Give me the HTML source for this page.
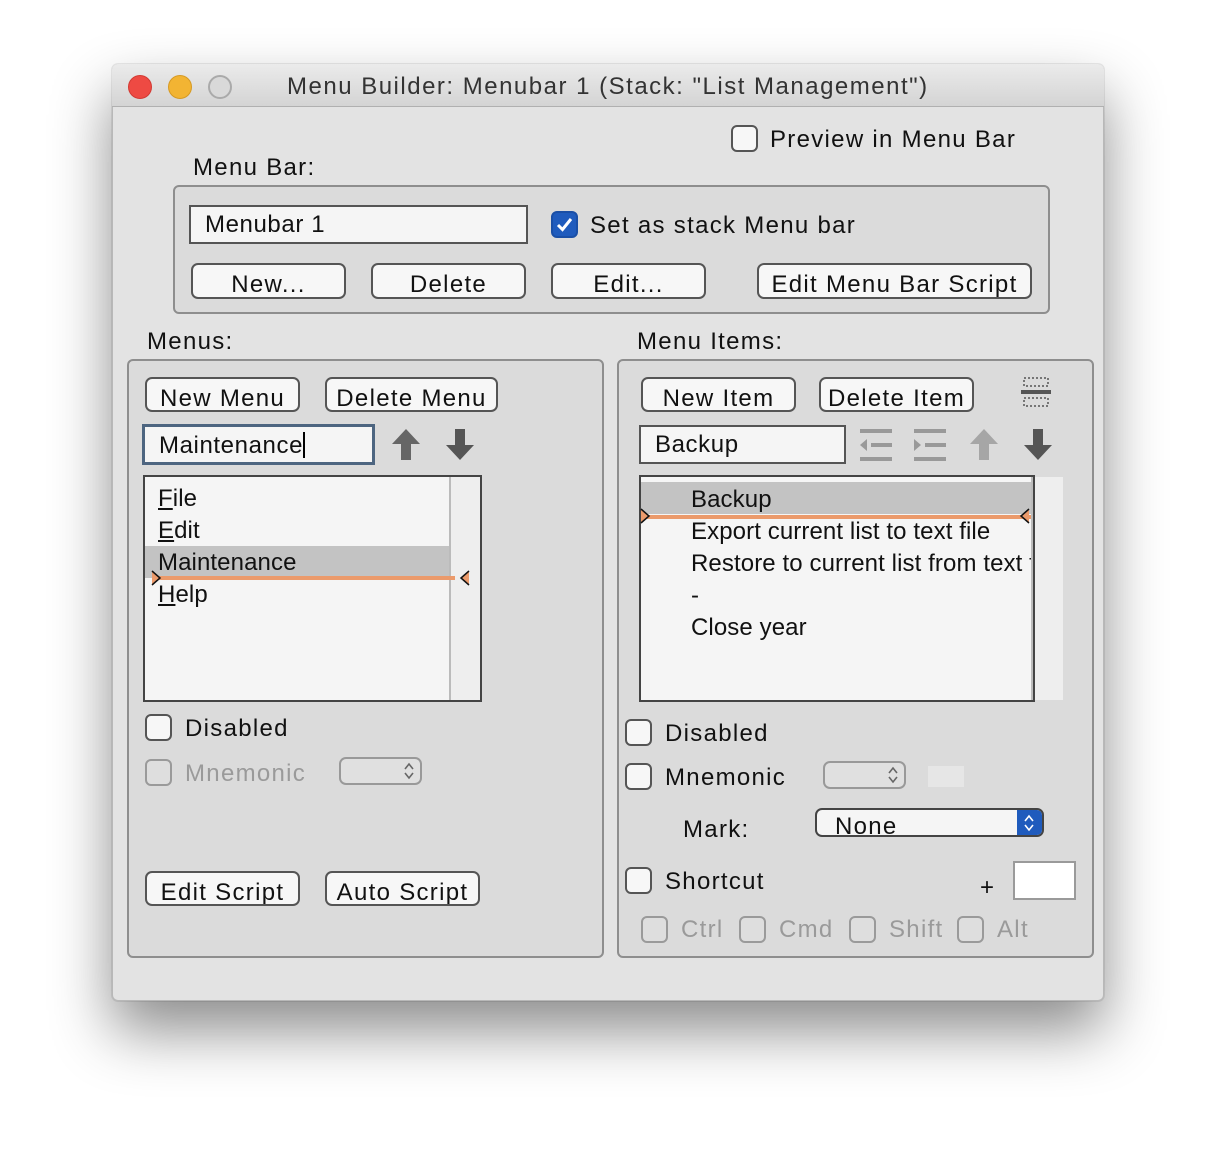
<!DOCTYPE html>
<html><head><meta charset="utf-8"><style>
*{box-sizing:border-box;margin:0;padding:0}
body{width:1216px;height:1162px;background:#fff;position:relative;overflow:hidden;font-family:"Liberation Sans",sans-serif;font-size:24px;letter-spacing:1.3px;color:#111}
.a{position:absolute}
.win{left:112px;top:64px;width:992px;height:937px;background:#e3e3e3;border-radius:6px;border:1px solid #b8b8b8;box-shadow:0 30px 60px rgba(0,0,0,.45),0 0 0 1px rgba(0,0,0,.08)}
.tb{left:112px;top:64px;width:992px;height:43px;background:linear-gradient(#ebebeb,#d4d4d4);border-bottom:1px solid #b0b0b0;border-radius:6px 6px 0 0}
.dot{width:24px;height:24px;border-radius:50%;top:75px}
.t{white-space:nowrap;line-height:28px}
.li{letter-spacing:0.1px}
.grp{background:#dbdbdb;border:2px solid #8e8e8e;border-radius:6px}
.fld{background:#f5f5f5;border:2px solid #555;padding-left:14px;line-height:36px;letter-spacing:0.6px}
.btn{background:#f7f7f7;border:2px solid #555;border-radius:7px;text-align:center;line-height:40px;overflow:hidden;white-space:nowrap}
.cb{width:27px;height:27px;border:2px solid #555;border-radius:6px;background:#f7f7f7}
.cbg{border-color:#9a9a9a;background:#dedede}
.g{color:#9a9a9a}
.list{background:#f5f5f5;border:2px solid #444}
.pop{border:2px solid #999;border-radius:7px;background:#e0e0e0}
</style></head><body>
<div class="a win"></div>
<div class="a tb"></div>
<div class="a dot" style="left:128px;background:#ee4a43;border:1px solid #d23a33"></div>
<div class="a dot" style="left:168px;background:#f2b433;border:1px solid #d69a24"></div>
<div class="a dot" style="left:208px;background:#d9d9d9;border:2px solid #aaa"></div>
<div class="a t" style="left:287px;top:73px;color:#333;letter-spacing:1.5px">Menu Builder: Menubar 1 (Stack: "List Management")</div>

<div class="a cb" style="left:731px;top:125px"></div>
<div class="a t" style="left:770px;top:126px">Preview in Menu Bar</div>
<div class="a t" style="left:193px;top:154px">Menu Bar:</div>

<div class="a grp" style="left:173px;top:185px;width:877px;height:129px"></div>
<div class="a fld" style="left:189px;top:205px;width:339px;height:39px">Menubar 1</div>
<div class="a cb" style="left:551px;top:211px;background:#1f5bbd;border-color:#1a4fa6"><svg width="23" height="23" viewBox="0 0 23 23" style="position:absolute;left:0;top:0"><path d="M5 12 L9.5 16.5 L18 6" stroke="#fff" stroke-width="3" fill="none"/></svg></div>
<div class="a t" style="left:590px;top:212px">Set as stack Menu bar</div>
<div class="a btn" style="left:191px;top:263px;width:155px;height:36px">New...</div>
<div class="a btn" style="left:371px;top:263px;width:155px;height:36px">Delete</div>
<div class="a btn" style="left:551px;top:263px;width:155px;height:36px">Edit...</div>
<div class="a btn" style="left:757px;top:263px;width:275px;height:36px">Edit Menu Bar Script</div>

<div class="a t" style="left:147px;top:328px">Menus:</div>
<div class="a t" style="left:637px;top:328px">Menu Items:</div>

<!-- left group -->
<div class="a grp" style="left:127px;top:359px;width:477px;height:599px"></div>
<div class="a btn" style="left:145px;top:377px;width:155px;height:35px">New Menu</div>
<div class="a btn" style="left:325px;top:377px;width:173px;height:35px">Delete Menu</div>
<div class="a fld" style="left:142px;top:424px;width:233px;height:41px;border:3px solid #4d6580;line-height:37px">Maintenance<span style="display:inline-block;width:2px;height:26px;background:#000;vertical-align:-5px"></span></div>
<svg class="a" style="left:390px;top:428px" width="32" height="34"><path d="M16 1 L30 16 L21 16 L21 32 L11 32 L11 16 L2 16Z" fill="#666"/></svg>
<svg class="a" style="left:444px;top:428px" width="32" height="34"><path d="M16 32 L30 17 L21 17 L21 1 L11 1 L11 17 L2 17Z" fill="#555"/></svg>
<div class="a list" style="left:143px;top:475px;width:339px;height:227px"></div>
<div class="a" style="left:449px;top:477px;width:31px;height:223px;background:#eeeeee;border-left:2px solid #bbb"></div>
<div class="a" style="left:145px;top:546px;width:304px;height:32px;background:#c3c3c3"></div>
<div class="a" style="left:152px;top:576px;width:303px;height:4px;background:#eb9a6b"></div>
<svg class="a" style="left:150px;top:570px" width="12" height="16"><path d="M2 1 L10 8 L2 15" stroke="#111" fill="#eb9a6b" stroke-width="1.5"/></svg>
<svg class="a" style="left:459px;top:570px" width="12" height="16"><path d="M10 1 L2 8 L10 15" stroke="#111" fill="#eb9a6b" stroke-width="1.5"/></svg>
<div class="a t li" style="left:158px;top:485px"><u>F</u>ile</div>
<div class="a t li" style="left:158px;top:517px"><u>E</u>dit</div>
<div class="a t li" style="left:158px;top:549px">Maintenance</div>
<div class="a t li" style="left:158px;top:581px"><u>H</u>elp</div>
<div class="a cb" style="left:145px;top:714px"></div>
<div class="a t" style="left:185px;top:715px">Disabled</div>
<div class="a cb cbg" style="left:145px;top:759px"></div>
<div class="a t g" style="left:185px;top:760px">Mnemonic</div>
<div class="a pop" style="left:339px;top:757px;width:83px;height:28px"><svg style="position:absolute;right:6px;top:3px" width="10" height="18"><path d="M1 7 L5 2 L9 7 M1 11 L5 16 L9 11" stroke="#666" stroke-width="1.6" fill="none"/></svg></div>
<div class="a btn" style="left:145px;top:871px;width:155px;height:35px">Edit Script</div>
<div class="a btn" style="left:325px;top:871px;width:155px;height:35px">Auto Script</div>

<!-- right group -->
<div class="a grp" style="left:617px;top:359px;width:477px;height:599px"></div>
<div class="a btn" style="left:641px;top:377px;width:155px;height:35px">New Item</div>
<div class="a btn" style="left:819px;top:377px;width:155px;height:35px">Delete Item</div>
<svg class="a" style="left:1020px;top:376px" width="32" height="34"><g fill="none" stroke="#555" stroke-width="1.5" stroke-dasharray="2 2"><rect x="4" y="2" width="24" height="8"/><rect x="4" y="22" width="24" height="8"/></g><rect x="1" y="14" width="30" height="4" fill="#555"/></svg>
<div class="a fld" style="left:639px;top:425px;width:207px;height:39px">Backup</div>
<svg class="a" style="left:858px;top:428px" width="36" height="34"><g fill="#999"><rect x="2" y="1" width="32" height="4"/><rect x="13" y="15" width="21" height="4"/><rect x="2" y="29" width="32" height="4"/><path d="M2 17 L9 11 L9 23Z"/></g></svg>
<svg class="a" style="left:912px;top:428px" width="36" height="34"><g fill="#999"><rect x="2" y="1" width="32" height="4"/><rect x="13" y="15" width="21" height="4"/><rect x="2" y="29" width="32" height="4"/><path d="M9 17 L2 11 L2 23Z"/></g></svg>
<svg class="a" style="left:968px;top:428px" width="32" height="34"><path d="M16 1 L30 16 L21 16 L21 32 L11 32 L11 16 L2 16Z" fill="#a6a6a6"/></svg>
<svg class="a" style="left:1022px;top:428px" width="32" height="34"><path d="M16 32 L30 17 L21 17 L21 1 L11 1 L11 17 L2 17Z" fill="#555"/></svg>
<div class="a" style="left:1033px;top:477px;width:30px;height:223px;background:#eeeeee"></div>
<div class="a list" style="left:639px;top:475px;width:396px;height:227px;overflow:hidden">
<div class="a" style="left:0;top:5px;width:392px;height:32px;background:#c3c3c3"></div>
<div class="a" style="left:6px;top:38px;width:384px;height:4px;background:#eb9a6b"></div>
<div class="a t li" style="left:50px;top:9px">Backup</div>
<div class="a t li" style="left:50px;top:41px">Export current list to text file</div>
<div class="a t li" style="left:50px;top:73px">Restore to current list from text file</div>
<div class="a t li" style="left:50px;top:105px">-</div>
<div class="a t li" style="left:50px;top:137px">Close year</div>
</div>
<div class="a" style="left:1031px;top:477px;width:2px;height:223px;background:#bbb"></div>
<svg class="a" style="left:639px;top:508px" width="12" height="16"><path d="M2 1 L10 8 L2 15" stroke="#111" fill="#eb9a6b" stroke-width="1.5"/></svg>
<svg class="a" style="left:1019px;top:508px" width="12" height="16"><path d="M10 1 L2 8 L10 15" stroke="#111" fill="#eb9a6b" stroke-width="1.5"/></svg>

<div class="a cb" style="left:625px;top:719px"></div>
<div class="a t" style="left:665px;top:720px">Disabled</div>
<div class="a cb" style="left:625px;top:763px"></div>
<div class="a t" style="left:665px;top:764px">Mnemonic</div>
<div class="a pop" style="left:823px;top:761px;width:83px;height:28px"><svg style="position:absolute;right:6px;top:3px" width="10" height="18"><path d="M1 7 L5 2 L9 7 M1 11 L5 16 L9 11" stroke="#666" stroke-width="1.6" fill="none"/></svg></div>
<div class="a" style="left:928px;top:766px;width:36px;height:21px;background:#e6e6e6"></div>
<div class="a t" style="left:683px;top:816px">Mark:</div>
<div class="a" style="left:815px;top:808px;width:229px;height:29px;background:#f5f5f5;border:2px solid #444;border-radius:7px;overflow:hidden">
<div class="a t" style="left:18px;top:3px">None</div>
<div class="a" style="right:0;top:0;width:25px;height:27px;background:#1f5bbd"><svg style="position:absolute;left:7px;top:4px" width="10" height="18"><path d="M1 7 L5 2 L9 7 M1 11 L5 16 L9 11" stroke="#fff" stroke-width="1.6" fill="none"/></svg></div>
</div>
<div class="a cb" style="left:625px;top:867px"></div>
<div class="a t" style="left:665px;top:868px">Shortcut</div>
<div class="a t" style="left:980px;top:874px">+</div>
<div class="a" style="left:1013px;top:861px;width:63px;height:39px;background:#fff;border:2px solid #9a9a9a"></div>
<div class="a cb cbg" style="left:641px;top:916px"></div>
<div class="a t g" style="left:681px;top:916px">Ctrl</div>
<div class="a cb cbg" style="left:739px;top:916px"></div>
<div class="a t g" style="left:779px;top:916px">Cmd</div>
<div class="a cb cbg" style="left:849px;top:916px"></div>
<div class="a t g" style="left:889px;top:916px">Shift</div>
<div class="a cb cbg" style="left:957px;top:916px"></div>
<div class="a t g" style="left:997px;top:916px">Alt</div>
</body></html>
